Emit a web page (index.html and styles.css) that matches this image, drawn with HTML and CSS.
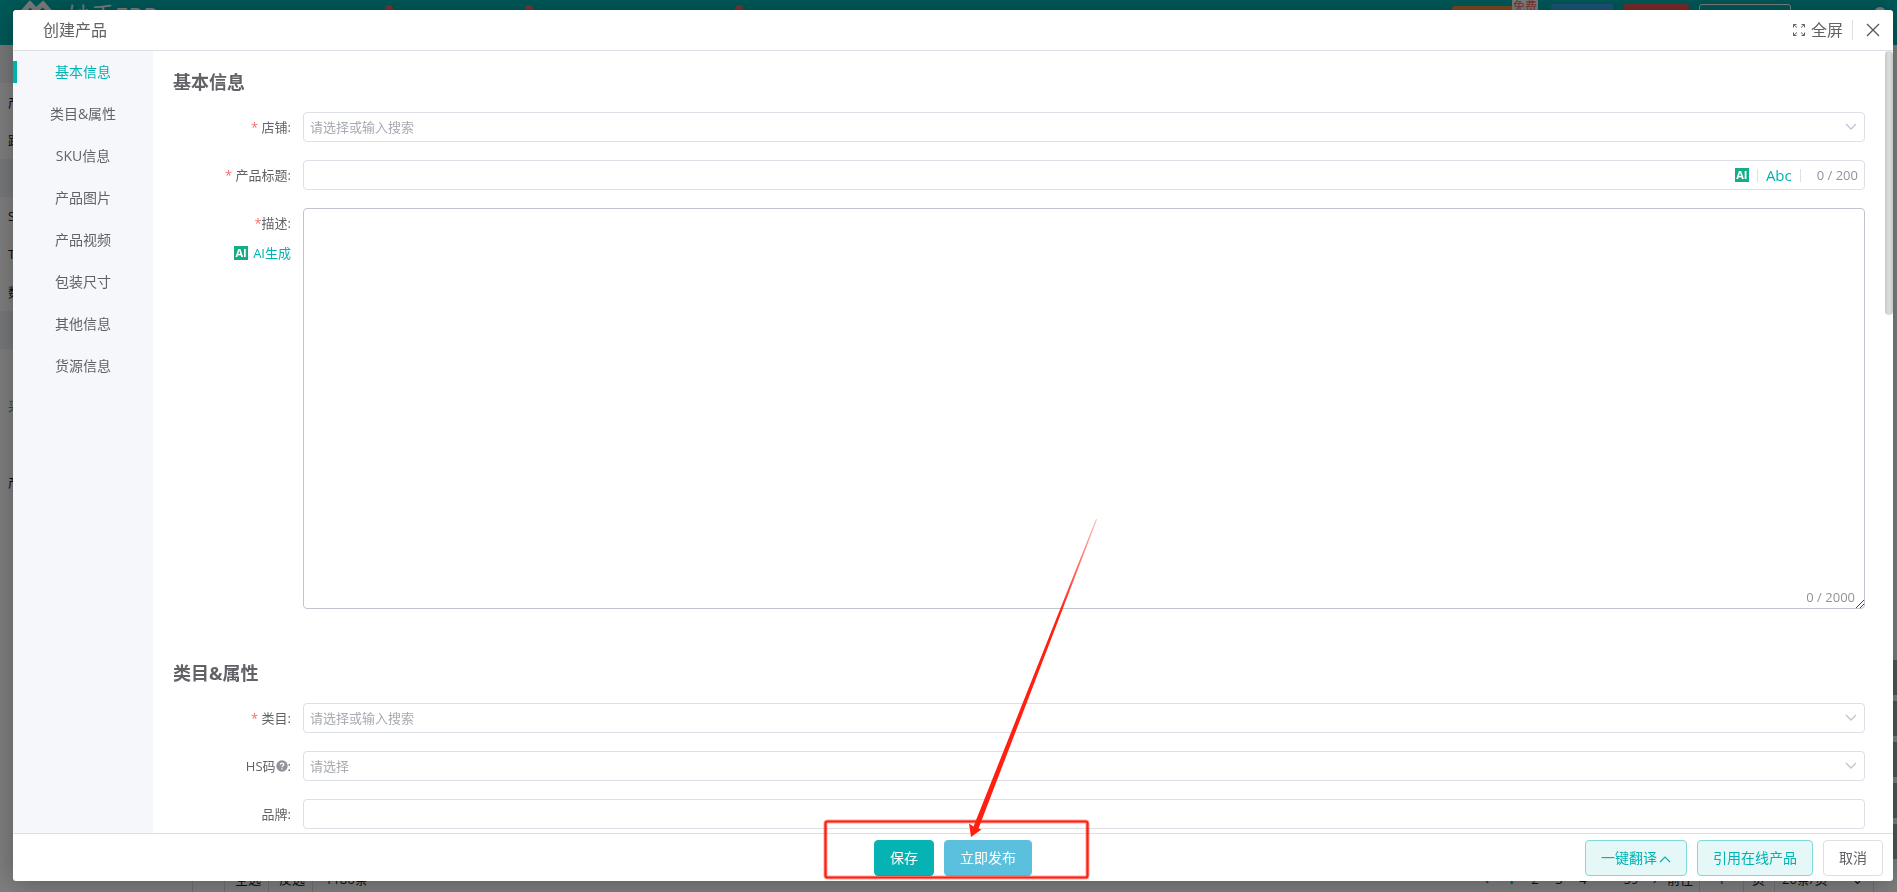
FILE: index.html
```html
<!DOCTYPE html>
<html lang="zh-CN">
<head>
<meta charset="utf-8">
<title>创建产品</title>
<link rel="stylesheet" href="styles.css">
</head>
<body>
<div class="page" aria-hidden="true">
  <header class="topbar">
    <svg class="logo" viewBox="0 0 32 24" width="32" height="24"><path d="M1 14 10 4l5 5M12 14 23 4l9 10" fill="none" stroke="#fff" stroke-width="5"/></svg>
    <span class="brand">妙手ERP</span>
    <i class="dot dot-a"></i><i class="dot dot-b"></i><i class="dot dot-c"></i>
    <div class="top-actions">
      <span class="chip chip-orange"><em class="chip-badge">免费</em></span>
      <span class="chip chip-blue"></span>
      <span class="chip chip-red"></span>
      <span class="chip chip-line"></span>
      <span class="avatar"></span>
    </div>
  </header>
  <div class="page-body">
    <ul class="page-menu">
      <li class="band"></li>
      <li>产</li>
      <li>跟</li>
      <li class="band"></li>
      <li>S</li>
      <li>T</li>
      <li>数</li>
      <li class="band"></li>
      <li></li>
      <li class="on">采</li>
      <li></li>
      <li>产</li>
    </ul>
    <div class="side-tools"><i></i><i></i><i></i><i></i><i></i></div>
  </div>
  <footer class="page-foot">
    <span class="foot-cell foot-check"></span>
    <span class="foot-cell">全选</span>
    <span class="foot-cell">反选</span>
    <span class="foot-total">1186条</span>
    <div class="pager">
      <span>‹</span><span class="on">1</span><span>2</span><span>3</span><span>4</span><span>···</span><span>59</span><span>›</span>
      <b class="jump">前往</b><b class="jump-box">1</b><b class="jump-unit">页</b><b class="size-box">20条/页 <i>⌄</i></b>
    </div>
  </footer>
</div>
<div class="mask"></div>

<section class="dialog" role="dialog" aria-labelledby="dialog-title">
  <header class="dialog-head">
    <h1 id="dialog-title">创建产品</h1>
    <div class="head-tools">
      <button class="plain full" type="button">
        <svg viewBox="0 0 12 12" width="12" height="12" fill="none" stroke="#606266"><path d="M.5 3.500v-3h3M.5.5l3.500 3M8.500.5h3v3M11.500.5l-3.500 3M.5 8.500v3h3M.5 11.500l3.500-3M8.500 11.500h3v-3M11.500 11.500l-3.500-3"/></svg>
        全屏
      </button>
      <button class="plain close" type="button" aria-label="关闭">
        <svg viewBox="0 0 14 14" width="14" height="14" fill="none" stroke="#55575c" stroke-width="1.300"><path d="m1 1 12 12M13 1 1 13"/></svg>
      </button>
    </div>
  </header>

  <div class="dialog-main">
    <nav class="side">
      <a class="active" href="#base">基本信息</a>
      <a href="#category">类目&amp;属性</a>
      <a href="#sku">SKU信息</a>
      <a href="#images">产品图片</a>
      <a href="#video">产品视频</a>
      <a href="#package">包装尺寸</a>
      <a href="#other">其他信息</a>
      <a href="#source">货源信息</a>
    </nav>
    <form class="content">
      <section class="group" id="base">
        <h2>基本信息</h2>
        <div class="row">
          <div class="label-col"><label for="shop"><span class="req">*</span> 店铺:</label></div>
          <div class="field">
            <select id="shop"><option>请选择或输入搜索</option></select>
            <svg class="caret" viewBox="0 0 12 8" width="12" height="8"><path d="m1 1 5 5 5-5"/></svg>
          </div>
        </div>
        <div class="row">
          <div class="label-col"><label for="title"><span class="req">*</span> 产品标题:</label></div>
          <div class="field box">
            <input id="title" type="text">
            <span class="ai">AI</span>
            <i class="bar"></i>
            <button class="plain abc" type="button">Abc</button>
            <i class="bar"></i>
            <span class="count">0 / 200</span>
          </div>
        </div>
        <div class="row">
          <div class="label-col">
            <label for="desc"><span class="req">*</span>描述:</label>
            <button class="plain generate" type="button"><span class="ai">AI</span>AI生成</button>
          </div>
          <div class="field">
            <textarea id="desc"></textarea>
            <span class="area-count">0 / 2000</span>
            <svg class="grip" viewBox="0 0 9 9" width="9" height="9"><path d="M1 9 9 1M5 9l4-4"/></svg>
          </div>
        </div>
      </section>
      <section class="group" id="category">
        <h2>类目&amp;属性</h2>
        <div class="row">
          <div class="label-col"><label for="cat"><span class="req">*</span> 类目:</label></div>
          <div class="field">
            <select id="cat"><option>请选择或输入搜索</option></select>
            <svg class="caret" viewBox="0 0 12 8" width="12" height="8"><path d="m1 1 5 5 5-5"/></svg>
          </div>
        </div>
        <div class="row">
          <div class="label-col"><label class="with-help" for="hs">HS码<svg viewBox="0 0 12 12" width="12" height="12"><circle cx="6" cy="6" r="5.700" fill="#909399"/><path d="M4.300 4.700C4.300 2.500 7.800 2.500 7.800 4.600 7.800 5.800 6 5.800 6 7.200M6 8.200v1.300" fill="none" stroke="#fff" stroke-width="1.300"/></svg>:</label></div>
          <div class="field">
            <select id="hs"><option>请选择</option></select>
            <svg class="caret" viewBox="0 0 12 8" width="12" height="8"><path d="m1 1 5 5 5-5"/></svg>
          </div>
        </div>
        <div class="row">
          <div class="label-col"><label for="maker">品牌:</label></div>
          <div class="field box"><input id="maker" type="text"></div>
        </div>
      </section>
    </form>
    <i class="thumb"></i>
  </div>

  <footer class="dialog-foot">
    <div class="foot-main">
      <button class="btn save" type="button">保存</button>
      <button class="btn publish" type="button">立即发布</button>
    </div>
    <div class="foot-side">
      <button class="btn soft" type="button">一键翻译<svg viewBox="0 0 12 8" width="12" height="8"><path d="m1 7 5-5 5 5"/></svg></button>
      <button class="btn soft" type="button">引用在线产品</button>
      <button class="btn line" type="button">取消</button>
    </div>
  </footer>
</section>

<svg class="note" viewBox="0 0 270 364" width="270" height="364" aria-hidden="true">
  <defs><linearGradient id="fade" x1="0" y1="1" x2="0" y2="0"><stop offset="0.700" stop-color="#ff2010"/><stop offset="1" stop-color="#ff2010" stop-opacity=".3"/></linearGradient></defs>
  <rect x="3.500" y="305.500" width="262" height="56" rx="2" fill="none" stroke="#ff2010" stroke-opacity=".4" stroke-width="4"/>
  <rect x="3.500" y="305.500" width="262" height="56" rx="2" fill="none" stroke="#ff2010" stroke-width="2.200"/>
  <path d="M149 321 147 307.500 151.500 310.500 274 3 275 3.500 156.500 312.500 159.500 313.500Z" fill="url(#fade)"/>
</svg>
</body>
</html>
```
FILE: styles.css
```css
* { box-sizing: border-box; }

body {
  margin: 0;
  height: 100vh;
  overflow: hidden;
  font: 13px/20px "Open Sans", "Noto Sans CJK SC", sans-serif;
  color: #606266;
}

h1, h2, ul { margin: 0; padding: 0; }
button, input, select, textarea { font: inherit; color: inherit; }
a { text-decoration: none; color: inherit; }

/* page under the dialog */
.page {
  height: 100vh;
  display: flex;
  flex-direction: column;
  background: #fff;
  color: #222;
}
.topbar {
  position: relative;
  flex: none;
  height: 45px;
  display: flex;
  align-items: flex-start;
  padding-left: 20px;
  background: #00b3b3;
}
.brand { margin-left: 15px; font-size: 24px; line-height: 32px; color: #fff; }
.logo { flex: none; }
.dot { position: absolute; top: 5px; width: 8px; height: 8px; border-radius: 50%; background: #f56c6c; }
.dot-a { left: 385px; }
.dot-b { left: 525px; }
.dot-c { left: 735px; }
.top-actions { display: flex; align-items: flex-start; gap: 10px; margin-left: auto; padding: 4px 11px 0 0; }
.chip { position: relative; height: 30px; border-radius: 3px; }
.chip-orange { width: 86px; margin: 2px 3px 0 0; background: #ff9340; }
.chip-badge {
  position: absolute; right: 0; top: -8px; padding: 0 1px; border-radius: 4px;
  background: #fff; color: #f56c6c; font: 12px/16px "Noto Sans CJK SC", sans-serif;
}
.chip-blue { width: 62px; background: #3aaaf5; }
.chip-red { width: 66px; background: #f45858; }
.chip-line { width: 92px; border: 1px solid #fff; }
.avatar { width: 12px; height: 12px; margin: 3px 0 0 73px; border-radius: 50%; background: #fff; }
.page-body { flex: 1; min-height: 0; display: flex; justify-content: space-between; }
.page-menu { width: 150px; list-style: none; }
.page-menu li { height: 38px; padding-left: 8px; line-height: 38px; }
.page-menu .band { background: #f0f2f5; }
.page-menu .on { color: #00b3b3; }
.side-tools { display: flex; flex-direction: column; justify-content: flex-end; gap: 6px; }
.side-tools i { width: 20px; height: 35px; background: #aaa; }
.page-foot {
  flex: none;
  height: 33px;
  display: flex;
  align-items: flex-start;
  padding: 0 23px 0 192px;
  line-height: 40px;
}
.foot-cell { width: 44px; height: 33px; padding-left: 10px; border-left: 1px solid #dcdfe6; }
.foot-check { width: 32px; }
.foot-total { height: 33px; padding-left: 12px; border-left: 1px solid #dcdfe6; }
.pager { display: flex; margin-left: auto; }
.pager span { width: 24px; text-align: center; }
.pager .on { color: #00b3b3; font-weight: bold; }
.pager b { height: 33px; font-weight: normal; }
.jump { width: 32px; }
.jump-box { width: 45px; border: solid #dcdfe6; border-width: 0 1px; text-align: center; }
.jump-unit { width: 30px; padding-left: 8px; }
.size-box { display: flex; justify-content: space-between; width: 100px; padding: 0 10px 0 7px; border: solid #dcdfe6; border-width: 0 1px; }
.size-box i { font-style: normal; }
.mask { position: fixed; inset: 0; background: rgba(0, 0, 0, .5); }

/* dialog */
.dialog {
  position: fixed;
  inset: 10px 4px 11px 13px;
  display: flex;
  flex-direction: column;
  overflow: hidden;
  border-radius: 3px;
  background: #fff;
  box-shadow: 0 2px 30px rgba(0, 0, 0, .3);
}
.dialog-head {
  flex: none;
  height: 41px;
  display: flex;
  align-items: center;
  justify-content: space-between;
  padding: 0 13px 0 30px;
  border-bottom: 1px solid #dcdfe6;
}
.dialog-head h1 { font-size: 16px; font-weight: normal; line-height: 24px; }
.plain { padding: 0; border: 0; background: none; cursor: pointer; }
.head-tools { display: flex; align-items: center; }
.full { display: flex; align-items: center; gap: 6px; padding-right: 9px; border-right: 1px solid #dcdfe6; font-size: 16px; line-height: 20px; }
.close { display: flex; margin-left: 13px; }

.dialog-main { position: relative; flex: 1; min-height: 0; display: flex; }
.side { flex: none; width: 140px; background: #f5f7fb; font-size: 14px; }
.side a { position: relative; display: block; line-height: 42px; text-align: center; }
.side .active { color: #00b3b3; }
.side .active::before { content: ""; position: absolute; left: 0; top: 10px; width: 4px; height: 22px; background: #00b3b3; }
.content { flex: 1; min-width: 0; overflow: hidden; padding: 16px 28px 0 20px; }
.thumb {
  position: absolute; top: 0; right: 0; width: 8px; height: 264px;
  border-radius: 4px; background: linear-gradient(90deg, #c8c8c8, #dedede 50%, #c8c8c8);
}

.group { display: flex; flex-direction: column; gap: 18px; margin-bottom: 49px; }
.group h2 { margin-bottom: -3px; font-size: 18px; line-height: 30px; }
.row { display: grid; grid-template-columns: 118px minmax(0, 1fr); gap: 12px; }
.label-col { display: flex; flex-direction: column; align-items: flex-end; line-height: 30px; white-space: nowrap; }
.req { color: #f56c6c; }
.with-help { display: flex; align-items: center; }
.generate { display: flex; align-items: center; gap: 5px; line-height: 30px; color: #00b3b3; }
.ai {
  display: inline-block; width: 14px; height: 14px; background: #13ae85; color: #fff;
  font-size: 11px; font-weight: bold; line-height: 14px; text-align: center;
}
.field { position: relative; display: flex; min-width: 0; }
.field select, .box, .field textarea {
  width: 100%;
  border: 1px solid #dcdfe6;
  border-radius: 4px;
  background: #fff;
  outline: 0;
}
.field select { height: 30px; padding: 0 30px 0 6px; appearance: none; color: #a8abb2; }
.caret { position: absolute; right: 8px; top: 11px; fill: none; stroke: #c0c4cc; stroke-width: 1.300; }
.box { height: 30px; align-items: center; padding-right: 6px; }
.box input { flex: 1; min-width: 0; height: 28px; padding: 0 6px; border: 0; background: none; outline: 0; }
.bar { width: 1px; height: 13px; margin: 0 8px; background: #dcdfe6; }
.abc { font-size: 15px; line-height: 20px; color: #00b3b3; }
.count { margin-left: 8px; color: #909399; }
.field textarea { display: block; height: 401px; padding: 5px 6px; border-color: #c0c4cc; resize: none; }
.area-count { position: absolute; right: 10px; bottom: 2px; color: #909399; }
.grip { position: absolute; right: 1px; bottom: 1px; stroke: #444; fill: none; }

.dialog-foot {
  flex: none;
  display: grid;
  grid-template-columns: 1fr auto 1fr;
  align-items: center;
  height: 48px;
  padding: 0 10px;
  border-top: 1px solid #dcdfe6;
}
.foot-main { grid-column: 2; display: flex; gap: 10px; }
.foot-side { display: flex; gap: 10px; justify-content: flex-end; }
.btn {
  height: 36px; padding: 0 15px; border: 1px solid #dcdfe6; border-radius: 4px;
  background: #fff; font-size: 14px; line-height: 20px; white-space: nowrap; cursor: pointer;
}
.save { border-color: #06b3b4; background: #06b3b4; color: #fff; }
.publish { border-color: #5bc0de; background: #5bc0de; color: #fff; }
.soft { border-color: #80d9d9; background: #e6f7f7; color: #00b3b3; }
.soft svg { margin-left: 2px; fill: none; stroke: currentColor; stroke-width: 1.200; }

/* pointer drawn over the publish button */
.note { position: fixed; left: 822px; top: 516px; overflow: visible; pointer-events: none; }
```
